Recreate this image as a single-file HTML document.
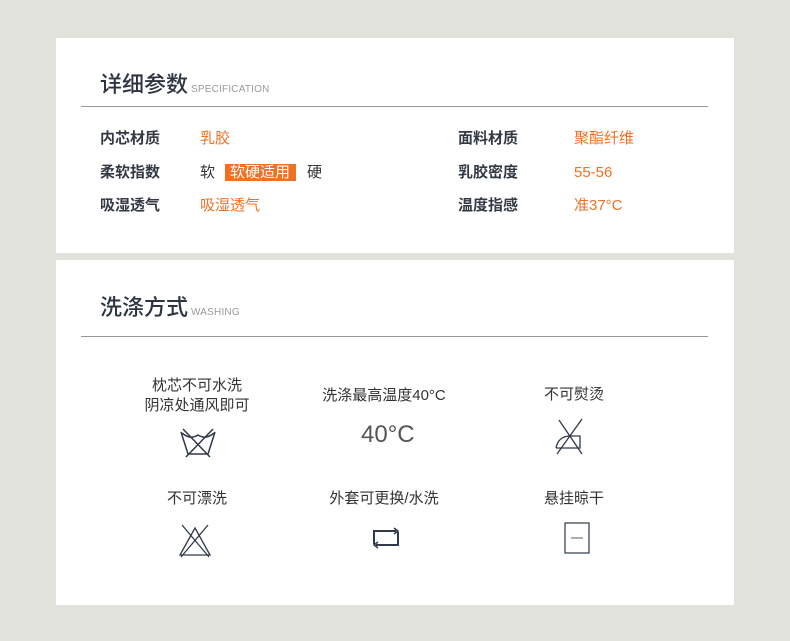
<!DOCTYPE html><html><head><meta charset="utf-8"><style>
body{margin:0;width:790px;height:641px;background:#e2e2dc;font-family:"Liberation Sans","Noto Sans CJK SC",sans-serif;position:relative;overflow:hidden;color:#333a45}
.card{position:absolute;left:56px;width:678px;background:#fff}
.a{position:absolute;white-space:nowrap;line-height:20px}
.t{font-size:22px;color:#2d3542;font-weight:500;line-height:26px}
.t small{font-size:10px;color:#999;font-weight:normal;margin-left:3px;letter-spacing:.2px}
.line{position:absolute;left:25px;width:627px;height:1px;background:#999}
.l{font-size:15px;font-weight:bold;color:#333a45}
.v{font-size:15px;color:#f07024}
.c{font-size:15px;color:#333;text-align:center;width:200px;line-height:20px}
svg{position:absolute}
</style></head><body>
<div class="card" style="top:38px;height:215px">
<div class="a t" style="left:44px;top:34px">详细参数<small>SPECIFICATION</small></div>
<div class="line" style="top:68px"></div>
<div class="a l" style="left:44px;top:91px">内芯材质</div><div class="a v" style="left:144px;top:91px">乳胶</div>
<div class="a l" style="left:44px;top:125px">柔软指数</div>
<div class="a" style="left:144px;top:125px;font-size:15px;color:#333">软<span style="background:#f07024;color:#fff;padding:0 6px 0 5px;margin:0 11px 0 10px">软硬适用</span>硬</div>
<div class="a l" style="left:44px;top:158px">吸湿透气</div><div class="a v" style="left:144px;top:158px">吸湿透气</div>
<div class="a l" style="left:402px;top:91px">面料材质</div><div class="a v" style="left:518px;top:91px">聚酯纤维</div>
<div class="a l" style="left:402px;top:125px">乳胶密度</div><div class="a v" style="left:518px;top:125px">55-56</div>
<div class="a l" style="left:402px;top:158px">温度指感</div><div class="a v" style="left:518px;top:158px">准37°C</div>
</div>
<div class="card" style="top:260px;height:345px">
<div class="a t" style="left:44px;top:35px">洗涤方式<small>WASHING</small></div>
<div class="line" style="top:76px"></div>
<div class="a c" style="left:41px;top:116px">枕芯不可水洗<br>阴凉处通风即可</div>
<div class="a c" style="left:228px;top:126px">洗涤最高温度40°C</div>
<div class="a c" style="left:418px;top:125px">不可熨烫</div>
<div class="a" style="left:305px;top:162px;font-size:24px;line-height:26px;color:#555">40°C</div>
<div class="a c" style="left:41px;top:229px">不可漂洗</div>
<div class="a c" style="left:228px;top:229px">外套可更换/水洗</div>
<div class="a c" style="left:418px;top:229px">悬挂晾干</div>
</div>
<svg style="left:180px;top:428px" width="36" height="30" viewBox="0 0 36 30" fill="none" stroke="#2f3a4a" stroke-width="1.5"><path d="M1 4 L8 26 H28 L35 4"/><path d="M2 5 Q10 12 18 7 Q26 12 34 5"/><path d="M3 1 L30 29 M33 1 L6 29"/></svg>
<svg style="left:554px;top:418px" width="32" height="38" viewBox="0 0 32 38" fill="none" stroke="#2f3a4a" stroke-width="1.3"><path d="M3 36 L28 1 M5 2 L28 36"/><path d="M2 30 Q4 19 15 18 H26 V30 H2"/></svg>
<svg style="left:178px;top:524px" width="34" height="34" viewBox="0 0 34 34" fill="none" stroke="#2f3a4a" stroke-width="1.3"><path d="M2 31 L17 4 L32 31 Z"/><path d="M4 1 L31 33 M30 1 L3 33"/></svg>
<svg style="left:371px;top:526px" width="30" height="24" viewBox="0 0 30 24" fill="none" stroke="#2f3a4a" stroke-width="2"><path d="M3 18 V5 H25"/><path d="M23 2 L27 5 L23 8" stroke-width="1.5"/><path d="M27 6 V19 H5"/><path d="M7 16 L3 19 L7 22" stroke-width="1.5"/></svg>
<svg style="left:564px;top:522px" width="27" height="32" viewBox="0 0 27 32" fill="none" stroke="#2f3a4a" stroke-width="1.2"><rect x="1" y="1" width="24" height="30"/><path d="M7 16 H19" stroke="#777"/></svg>
</body></html>
